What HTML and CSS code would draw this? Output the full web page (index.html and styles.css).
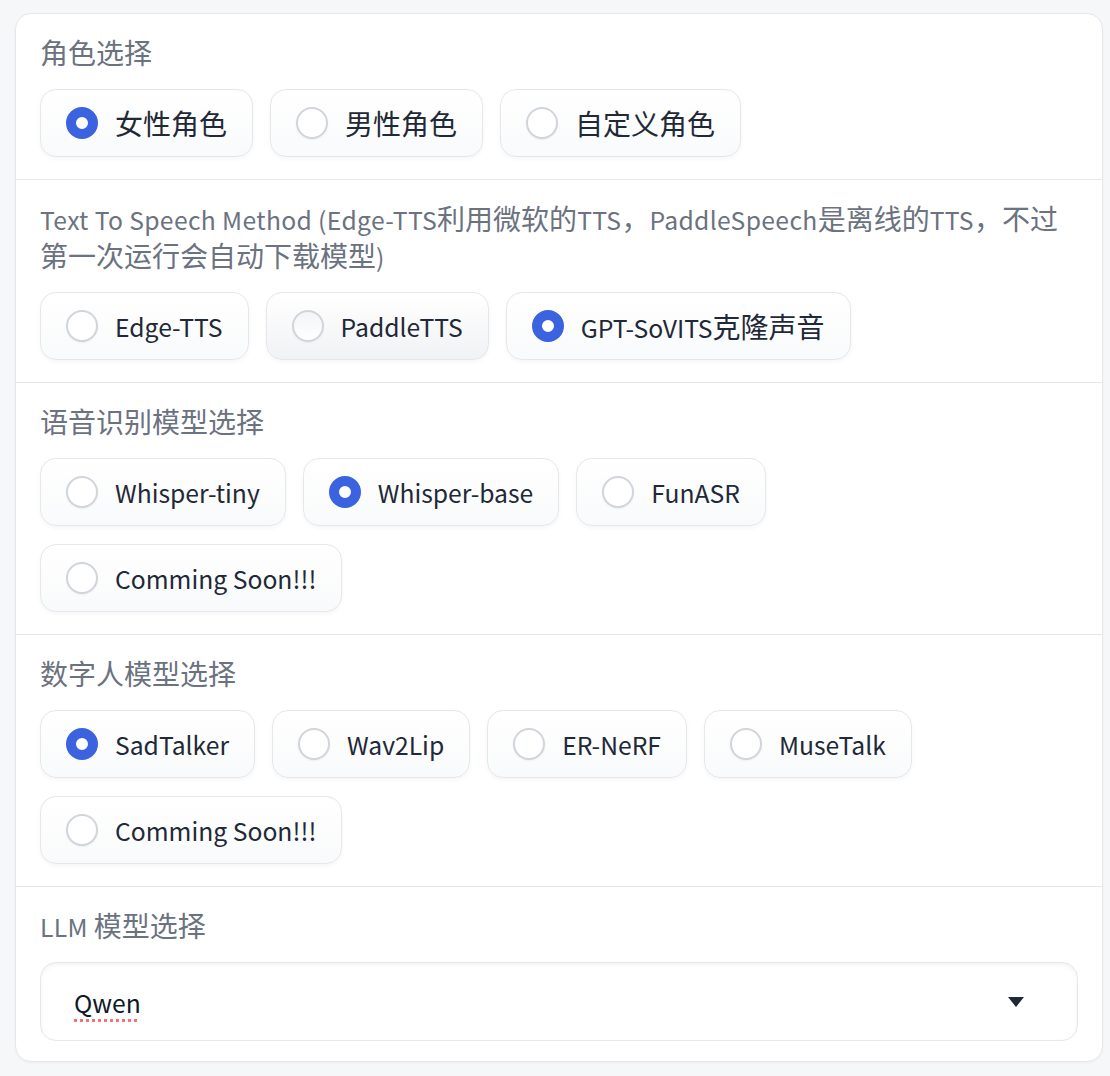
FILE: index.html
```html
<!DOCTYPE html>
<html lang="zh">
<head>
<meta charset="utf-8">
<title>Settings</title>
<link rel="stylesheet" href="styles.css">
</head>
<body>
<div class="card">
  <section class="block">
    <div class="label">角色选择</div>
    <div class="options">
      <div class="opt"><span class="dot on"></span><span class="txt">女性角色</span></div>
      <div class="opt"><span class="dot"></span><span class="txt">男性角色</span></div>
      <div class="opt"><span class="dot"></span><span class="txt">自定义角色</span></div>
    </div>
  </section>
  <section class="block">
    <div class="label"><span class="lat">Text To Speech Method (Edge-TTS</span>利用微软的<span class="lat">TTS</span>，<span class="lat">PaddleSpeech</span>是离线的<span class="lat">TTS</span>，不过第一次运行会自动下载模型<span class="lat">)</span></div>
    <div class="options">
      <div class="opt"><span class="dot"></span><span class="txt lat">Edge-TTS</span></div>
      <div class="opt hover"><span class="dot"></span><span class="txt lat">PaddleTTS</span></div>
      <div class="opt"><span class="dot on"></span><span class="txt"><span class="lat">GPT-SoVITS</span>克隆声音</span></div>
    </div>
  </section>
  <section class="block">
    <div class="label">语音识别模型选择</div>
    <div class="options">
      <div class="opt"><span class="dot"></span><span class="txt lat">Whisper-tiny</span></div>
      <div class="opt"><span class="dot on"></span><span class="txt lat">Whisper-base</span></div>
      <div class="opt"><span class="dot"></span><span class="txt lat">FunASR</span></div>
      <div class="opt"><span class="dot"></span><span class="txt lat">Comming Soon!!!</span></div>
    </div>
  </section>
  <section class="block">
    <div class="label">数字人模型选择</div>
    <div class="options">
      <div class="opt"><span class="dot on"></span><span class="txt lat">SadTalker</span></div>
      <div class="opt"><span class="dot"></span><span class="txt lat">Wav2Lip</span></div>
      <div class="opt"><span class="dot"></span><span class="txt lat">ER-NeRF</span></div>
      <div class="opt"><span class="dot"></span><span class="txt lat">MuseTalk</span></div>
      <div class="opt"><span class="dot"></span><span class="txt lat">Comming Soon!!!</span></div>
    </div>
  </section>
  <section class="block">
    <div class="label"><span class="lat">LLM </span>模型选择</div>
    <div class="select">
      <span class="value lat">Qwen</span>
      <svg class="caret" width="16" height="10" viewBox="0 0 16 10"><path d="M0 0 H16 L8 10 Z" fill="#1f2937"/></svg>
    </div>
  </section>
</div>
</body>
</html>
```
FILE: styles.css
```css
html, body {
  margin: 0;
  padding: 0;
}
body {
  background: #f6f7f9;
  font-family: "Noto Sans CJK SC", "Noto Sans", sans-serif;
  padding: 13px 7px 0 15px;
  box-sizing: border-box;
  min-height: 1076px;
}
.card {
  background: #ffffff;
  border: 1px solid #e5e7eb;
  border-radius: 16px;
  box-shadow: 0 1px 3px rgba(0, 0, 0, 0.04);
  overflow: hidden;
}
.block {
  padding: 20px 24px 22px 24px;
}
.block + .block {
  border-top: 1px solid #e5e7eb;
}
.block:last-child {
  padding-bottom: 20px;
}
.label {
  font-size: 28px;
  line-height: 37px;
  color: #6b7280;
  margin-bottom: 18px;
}
.lat {
  font-size: 24.7px;
  line-height: 20px;
}
.label .lat {
  letter-spacing: 0.35px;
}
.options {
  display: flex;
  flex-wrap: wrap;
  column-gap: 17px;
  row-gap: 18px;
}
.opt {
  display: flex;
  align-items: center;
  gap: 17px;
  height: 68px;
  box-sizing: border-box;
  padding: 0 25px;
  border: 1px solid #e5e7eb;
  border-radius: 16px;
  background: linear-gradient(to top, #f9fafb, #ffffff);
  box-shadow: 0 2px 4px rgba(0, 0, 0, 0.04);
}
.opt.hover {
  background: linear-gradient(to top, #f1f2f4, #ffffff);
}
.txt {
  font-size: 28px;
  line-height: 36px;
  color: #1f2937;
  white-space: nowrap;
}
.txt.lat {
  font-size: 24.7px;
  line-height: 36px;
}
.dot {
  width: 32px;
  height: 32px;
  box-sizing: border-box;
  border-radius: 50%;
  border: 2px solid #d1d5db;
  background: #ffffff;
  box-shadow: 0 1px 2px rgba(0, 0, 0, 0.05);
  flex: none;
}
.opt.hover .dot {
  background: linear-gradient(to top, #ffffff, #f3f4f6);
}
.dot.on {
  border: 10px solid #3b63df;
  background: #ffffff;
  box-shadow: none;
}
.select {
  display: flex;
  align-items: center;
  justify-content: space-between;
  height: 79px;
  box-sizing: border-box;
  padding: 0 53px 0 33px;
  border: 1px solid #e5e7eb;
  border-radius: 16px;
  background: #ffffff;
  box-shadow: inset 0 2px 4px rgba(0, 0, 0, 0.05);
}
.value {
  line-height: 36px;
  color: #111827;
  text-decoration: underline dotted #f87171;
  text-decoration-thickness: 3px;
  text-underline-offset: 6px;
}
.caret {
  display: block;
  flex: none;
}
```
